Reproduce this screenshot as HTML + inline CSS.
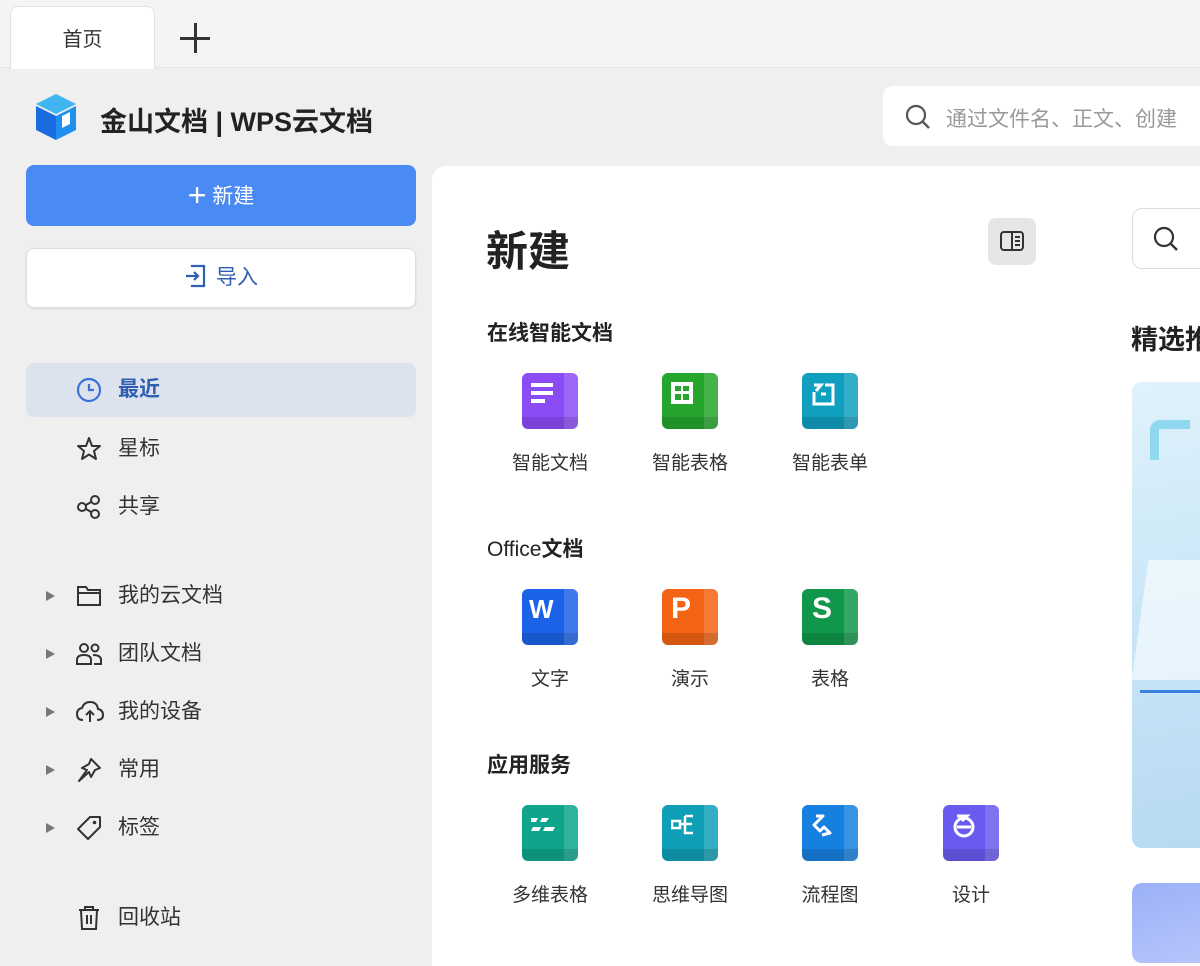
<!DOCTYPE html>
<html><head><meta charset="utf-8"><style>
*{margin:0;padding:0;box-sizing:border-box}
body{width:1200px;height:948px;overflow:hidden;background:#efefef;font-family:"Liberation Sans","Noto Sans CJK SC",sans-serif;color:#222;position:relative}
.abs{position:absolute}
.tabbar{left:0;top:0;width:1200px;height:68px;background:#f4f4f4;border-bottom:1px solid #e4e4e4}
.tab{left:10px;top:6px;width:145px;height:63px;background:#fff;border:1px solid #e2e2e2;border-bottom:none;border-radius:8px 8px 0 0;text-align:center;line-height:66px;font-size:20px;color:#333}
.btn{left:26px;width:390px;border-radius:8px;text-align:center;font-size:21px}
.nav{left:26px;width:390px;height:54px;border-radius:8px;font-size:21px;color:#333;line-height:54px}
.nav svg{position:absolute;left:50px;top:14px}
.nav span{position:absolute;left:92px}
.tri{position:absolute;left:20px;top:22px;width:0;height:0;border-left:9px solid #777;border-top:5.5px solid transparent;border-bottom:5.5px solid transparent}
.main{left:432px;top:166px;width:800px;height:800px;background:#fff;border-radius:14px 0 0 0}
.ic{width:56px;height:56px;border-radius:6px;overflow:hidden}
.ic .r{position:absolute;right:0;top:0;width:14px;height:56px;opacity:.15;background:#fff}
.ic .b{position:absolute;left:0;bottom:0;width:56px;height:12px;background:rgba(0,0,0,.12)}
.lbl{width:120px;text-align:center;font-size:19px;color:#333}
.h{font-size:21px;font-weight:bold;color:#222;white-space:nowrap}
</style></head><body>
<div class="abs tabbar"></div>
<div class="abs tab">首页</div>
<div class="abs" style="left:180px;width:30px;height:3px;background:#333;top:37px"></div>
<div class="abs" style="left:194px;top:23px;width:3px;height:30px;background:#333"></div>

<svg class="abs" style="left:34px;top:92px" width="44" height="50" viewBox="0 0 44 50">
<path d="M22 2 L42 12 L22 22 L2 12Z" fill="#3fb4f0"/>
<path d="M2 14 L22 24 L22 48 L2 38Z" fill="#1a6ce0"/>
<path d="M22 24 L42 14 L42 38 L22 48Z" fill="#1f8ff0"/>
<path d="M28 24 L36 20 L36 32 L28 36Z" fill="#fff"/>
</svg>
<div class="abs" style="left:100px;top:100px;font-size:27px;color:#222;font-weight:bold;white-space:nowrap">金山文档 | WPS云文档</div>

<div class="abs" style="left:883px;top:86px;width:330px;height:60px;background:#fff;border-radius:10px"></div>
<svg class="abs" style="left:904px;top:103px" width="28" height="28" viewBox="0 0 28 28"><circle cx="12" cy="12" r="9" fill="none" stroke="#555" stroke-width="2.2"/><path d="M19 19 L25 25" stroke="#555" stroke-width="2.4"/></svg>
<div class="abs" style="left:946px;top:103px;font-size:21px;color:#999;white-space:nowrap">通过文件名、正文、创建</div>

<div class="abs btn" style="top:165px;height:61px;background:#4a8af5;color:#fff;line-height:61px">
<span style="font-size:32px;font-weight:300;vertical-align:-3px">+</span> 新建</div>
<div class="abs btn" style="top:248px;height:60px;background:#fff;border:1px solid #ddd;color:#2f5fb0;line-height:58px;box-shadow:0 1px 2px rgba(0,0,0,.08)">
<svg width="24" height="26" viewBox="0 0 24 26" style="vertical-align:-5px;margin-right:8px"><path d="M8 4 V3 H20 V23 H8 V22" fill="none" stroke="#2f5fb0" stroke-width="2.2"/><path d="M2 13 H14 M10 9 L14 13 L10 17" fill="none" stroke="#2f5fb0" stroke-width="2.2"/></svg>导入</div>

<div class="abs nav" style="top:363px;background:#dce2ee;color:#2f5fb0;font-weight:bold">
<svg width="26" height="26" viewBox="0 0 26 26"><circle cx="13" cy="13" r="11" fill="none" stroke="#3a72d8" stroke-width="2.2"/><path d="M13 7 V13 H18" fill="none" stroke="#3a72d8" stroke-width="2.2"/></svg><span>最近</span></div>
<div class="abs nav" style="top:422px"><svg width="26" height="26" viewBox="0 0 26 26"><path d="M13 2 L16 10 L24 10 L18 15 L20 23 L13 18.5 L6 23 L8 15 L2 10 L10 10Z" fill="none" stroke="#333" stroke-width="2" stroke-linejoin="round"/></svg><span>星标</span></div>
<div class="abs nav" style="top:480px"><svg width="26" height="26" viewBox="0 0 26 26"><circle cx="6" cy="13" r="4" fill="none" stroke="#333" stroke-width="2"/><circle cx="19" cy="6" r="4" fill="none" stroke="#333" stroke-width="2"/><circle cx="19" cy="20" r="4" fill="none" stroke="#333" stroke-width="2"/><path d="M10 11 L15 8 M10 15 L15 18" stroke="#333" stroke-width="2"/></svg><span>共享</span></div>

<div class="abs nav" style="top:569px"><i class="tri"></i><svg width="26" height="26" viewBox="0 0 26 26"><path d="M2 4 H10 L12 7 H24 V22 H2Z M2 10 H24" fill="none" stroke="#333" stroke-width="2"/></svg><span>我的云文档</span></div>
<div class="abs nav" style="top:627px"><i class="tri"></i><svg width="26" height="26" viewBox="0 0 26 26"><circle cx="8" cy="7" r="4" fill="none" stroke="#333" stroke-width="2"/><circle cx="19" cy="7" r="3.5" fill="none" stroke="#333" stroke-width="2"/><path d="M1 23 V19 Q1 14 8 14 Q15 14 15 19 V23Z M17 14 Q25 14 25 19 V23 H18" fill="none" stroke="#333" stroke-width="2"/></svg><span>团队文档</span></div>
<div class="abs nav" style="top:685px"><i class="tri"></i><svg width="28" height="26" viewBox="0 0 28 26"><path d="M7 21 Q1 21 1 15 Q1 10 6 9 Q8 3 14 3 Q21 3 22 10 Q27 11 27 16 Q27 21 21 21" fill="none" stroke="#333" stroke-width="2"/><path d="M14 23 V12 M10 16 L14 12 L18 16" fill="none" stroke="#333" stroke-width="2"/></svg><span>我的设备</span></div>
<div class="abs nav" style="top:743px"><i class="tri"></i><svg width="26" height="26" viewBox="0 0 26 26"><path d="M15 2 L24 11 L19 13 L15 20 L13 15 L3 24 L11 13 L6 11 L13 7Z" fill="none" stroke="#333" stroke-width="2" stroke-linejoin="round"/></svg><span>常用</span></div>
<div class="abs nav" style="top:801px"><i class="tri"></i><svg width="26" height="26" viewBox="0 0 26 26"><path d="M14 2 H24 V12 L12 24 L2 14Z" fill="none" stroke="#333" stroke-width="2" stroke-linejoin="round"/><circle cx="18.5" cy="7.5" r="1.8" fill="#333"/></svg><span>标签</span></div>
<div class="abs nav" style="top:891px"><svg width="26" height="26" viewBox="0 0 26 26"><path d="M3 5 H23 M9 5 V2 H17 V5 M5 5 L6 24 H20 L21 5 M11 10 V19 M15 10 V19" fill="none" stroke="#333" stroke-width="2"/></svg><span>回收站</span></div>

<div class="abs main"></div>
<div class="abs" style="left:486px;top:218px;font-size:42px;font-weight:bold;color:#222">新建</div>
<div class="abs" style="left:988px;top:218px;width:48px;height:47px;background:#e6e6e6;border-radius:8px"></div>
<svg class="abs" style="left:999px;top:230px" width="26" height="22" viewBox="0 0 26 22"><rect x="2" y="2" width="22" height="18" rx="3" fill="none" stroke="#333" stroke-width="2"/><path d="M13 2 V20 M16 7 H21 M16 11 H21 M16 15 H21" stroke="#333" stroke-width="2"/></svg>
<div class="abs" style="left:1132px;top:208px;width:80px;height:61px;border:1px solid #ddd;border-radius:10px;background:#fff"></div>
<svg class="abs" style="left:1152px;top:225px" width="28" height="28" viewBox="0 0 28 28"><circle cx="12" cy="12" r="9" fill="none" stroke="#333" stroke-width="2.2"/><path d="M19 19 L25 25" stroke="#333" stroke-width="2.4"/></svg>
<div class="abs h" style="left:1131px;top:318px;font-size:27px">精选推</div>
<div class="abs" style="left:1132px;top:382px;width:80px;height:466px;border-radius:10px;background:linear-gradient(170deg,#e0f2fb,#c8e6f7 50%,#b7d9f2)"></div>
<div class="abs" style="left:1150px;top:420px;width:40px;height:40px;border:9px solid #8fd8f0;border-right:none;border-bottom:none;border-radius:10px 0 0 0"></div>
<div class="abs" style="left:1140px;top:560px;width:70px;height:120px;background:rgba(255,255,255,.6);transform:skewX(-8deg)"></div>
<div class="abs" style="left:1140px;top:690px;width:70px;height:3px;background:#3b82e0"></div>
<div class="abs" style="left:1132px;top:883px;width:80px;height:80px;border-radius:10px;background:linear-gradient(160deg,#9bb0f8,#b7c6fb)"></div>

<div class="abs h" style="left:487px;top:317px">在线智能文档</div>
<div class="abs h" style="left:487px;top:533px;font-weight:normal">Office<b>文档</b></div>
<div class="abs h" style="left:487px;top:749px">应用服务</div>

<div class="abs ic" style="left:522px;top:373px;background:#8b4cf6"><div class="r"></div><div class="b"></div>
<svg class="abs" style="left:9px;top:10px" width="28" height="26"><rect x="0" y="0" width="22" height="4" fill="#fff"/><rect x="0" y="8" width="22" height="4" fill="#fff"/><rect x="0" y="16" width="14" height="4" fill="#fff"/></svg></div>
<div class="abs ic" style="left:662px;top:373px;background:#25a52c"><div class="r"></div><div class="b"></div>
<svg class="abs" style="left:9px;top:9px" width="26" height="24"><rect x="0" y="0" width="22" height="22" fill="#fff"/><rect x="4" y="4" width="6" height="5" fill="#25a52c"/><rect x="12" y="4" width="6" height="5" fill="#25a52c"/><rect x="4" y="12" width="6" height="6" fill="#25a52c"/><rect x="12" y="12" width="6" height="6" fill="#25a52c"/></svg></div>
<div class="abs ic" style="left:802px;top:373px;background:#119fc0"><div class="r"></div><div class="b"></div>
<svg class="abs" style="left:9px;top:9px" width="28" height="26"><path d="M3 10 V22 H22 V3 H14 M3 3 H10 L5 9 M10 12 H15" fill="none" stroke="#fff" stroke-width="3"/></svg></div>
<div class="abs lbl" style="left:490px;top:448px">智能文档</div>
<div class="abs lbl" style="left:630px;top:448px">智能表格</div>
<div class="abs lbl" style="left:770px;top:448px">智能表单</div>

<div class="abs ic" style="left:522px;top:589px;background:#1c62e8"><div class="r"></div><div class="b"></div><div class="abs" style="left:7px;top:5px;color:#fff;font-weight:bold;font-size:26px">W</div></div>
<div class="abs ic" style="left:662px;top:589px;background:#f26313"><div class="r"></div><div class="b"></div><div class="abs" style="left:9px;top:3px;color:#fff;font-weight:bold;font-size:30px">P</div></div>
<div class="abs ic" style="left:802px;top:589px;background:#11974b"><div class="r"></div><div class="b"></div><div class="abs" style="left:10px;top:3px;color:#fff;font-weight:bold;font-size:30px">S</div></div>
<div class="abs lbl" style="left:490px;top:664px">文字</div>
<div class="abs lbl" style="left:630px;top:664px">演示</div>
<div class="abs lbl" style="left:770px;top:664px">表格</div>

<div class="abs ic" style="left:522px;top:805px;background:#0ea58c"><div class="r"></div><div class="b"></div>
<svg class="abs" style="left:7px;top:9px" width="30" height="26"><path d="M2 4 H9 L7 8 H2Z M13 4 H20 L17 8 H11Z M4 13 H12 L10 17 H2Z M16 13 H26 L24 17 H14Z" fill="#fff"/></svg></div>
<div class="abs ic" style="left:662px;top:805px;background:#0fa0b8"><div class="r"></div><div class="b"></div>
<svg class="abs" style="left:9px;top:8px" width="28" height="28"><rect x="1" y="8" width="8" height="7" fill="none" stroke="#fff" stroke-width="2.5"/><path d="M9 11 H14 M14 3 V20 H22 M14 3 H22 M14 11 H21" fill="none" stroke="#fff" stroke-width="2.5"/></svg></div>
<div class="abs ic" style="left:802px;top:805px;background:#1680e0"><div class="r"></div><div class="b"></div>
<svg class="abs" style="left:8px;top:8px" width="28" height="28"><path d="M6 3 L13 3 L4 12 L10 18 L14 14 L20 20 L12 22" fill="none" stroke="#fff" stroke-width="3" stroke-linejoin="round"/></svg></div>
<div class="abs ic" style="left:943px;top:805px;background:#6a5bf0"><div class="r"></div><div class="b"></div>
<svg class="abs" style="left:8px;top:7px" width="28" height="28"><circle cx="13" cy="15" r="9" fill="none" stroke="#fff" stroke-width="3"/><path d="M6 4 H16 L11 9 M6 15 H20" fill="none" stroke="#fff" stroke-width="3"/></svg></div>
<div class="abs lbl" style="left:490px;top:880px">多维表格</div>
<div class="abs lbl" style="left:630px;top:880px">思维导图</div>
<div class="abs lbl" style="left:770px;top:880px">流程图</div>
<div class="abs lbl" style="left:911px;top:880px">设计</div>
</body></html>
